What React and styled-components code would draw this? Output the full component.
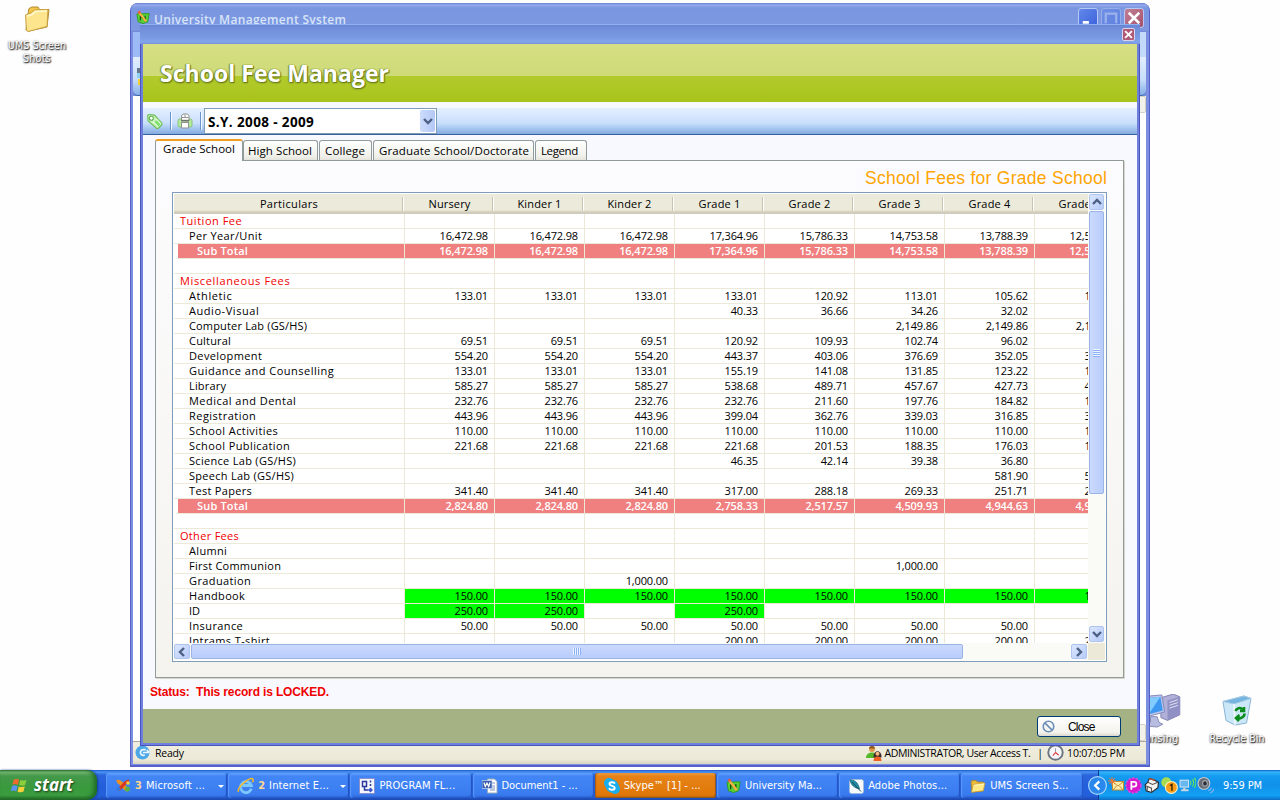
import React, { useLayoutEffect, useRef } from 'react';
import styled, { createGlobalStyle, css } from 'styled-components';

const UI = `"Open Sans", "Noto Sans", sans-serif`;
const TAHOMA = `"DejaVu Sans Condensed", "DejaVu Sans", "Noto Sans", sans-serif`;
const SANS = `"Liberation Sans", sans-serif`;

const Global = createGlobalStyle`
  * { box-sizing: border-box; }
  body { margin: 0; overflow: hidden; background: #fefefe; }
`;

/* Tracks a label out (or in) so that it fills a given advance width. */
const Label = styled.span`
  display: inline-block;
  white-space: pre;
`;
function Fit({ w, children }) {
  const ref = useRef(null);
  useLayoutEffect(() => {
    const el = ref.current;
    el.style.letterSpacing = '0px';
    const natural = el.getBoundingClientRect().width;
    el.style.letterSpacing = `${(w - natural) / (el.textContent.length - 0.5)}px`;
  }, [w, children]);
  return <Label ref={ref}>{children}</Label>;
}

const Desktop = styled.main`
  position: relative;
  width: 1280px;
  height: 800px;
  overflow: hidden;
  background: #fefefe;
  color: #000;
  font: 11px ${UI};
`;

const Shortcut = styled.div`
  position: absolute;
  left: ${(p) => p.$x}px;
  top: ${(p) => p.$y}px;
  width: 80px;
  display: flex;
  flex-direction: column;
  align-items: center;
  gap: ${(p) => p.$gap ?? 4}px;
  color: #fff;
  font: 10.5px/13px ${TAHOMA};
  text-align: center;
  text-shadow: 1px 1px 1px #333, 0 1px 2px #555, 0 0 2px #888;
`;

/* ---------- outer window ---------- */
const OuterWindow = styled.section`
  position: absolute;
  left: 130px;
  top: 3px;
  width: 1020px;
  height: 764px;
  display: flex;
  flex-direction: column;
  border: solid #5560c8;
  border-width: 0 1px 2px;
  border-radius: 8px 8px 0 0;
  overflow: hidden;
  background: #7b8ee0;
`;
const OuterTitle = styled.header`
  height: 29px;
  flex: none;
  display: flex;
  align-items: flex-start;
  padding: 7px 5px 0 5px;
  background: linear-gradient(#6880d0 0, #93abea 2px, #7b96e0 5px, #7b98e1 20px, #8098e0 27px, #6f88d8);
  color: #d8e4f8;
  font: 600 12px/20px ${UI};
`;
const OuterName = styled.div`
  flex: 1;
  padding-left: 4px;
`;
const Caption = styled.span`
  width: 20px;
  height: 20px;
  margin: -2px 0 0 3px;
  display: flex;
  align-items: center;
  justify-content: center;
  border: 1px solid #b8c8f4;
  border-radius: 3px;
  opacity: ${(p) => (p.$dim ? 0.45 : 1)};
  background: ${(p) => (p.$red ? 'linear-gradient(135deg,#c08098,#a8506a)' : 'linear-gradient(135deg,#6288ea,#3c62dc)')};
`;
const OuterMenu = styled.div`
  height: 25px;
  flex: none;
  margin: 0 3px 0 2px;
  background: linear-gradient(90deg, #9cbaf6, #c4dafa);
`;
const OuterTools = styled.div`
  height: 39px;
  flex: none;
  margin: 0 3px 0 2px;
  padding: 11px 0 0 4px;
  border-bottom: 1px solid #3866a8;
  border-radius: 0 0 5px 5px;
  background: linear-gradient(#e2eefe, #c6dcfa 60%, #86aee6);
`;
const OuterClient = styled.div`
  flex: 1;
  margin: 0 3px 0 2px;
  display: flex;
  flex-direction: column;
  align-items: flex-end;
  justify-content: space-between;
  background: #fff;
`;
const DisabledArrow = styled.div`
  width: 17px;
  height: 17px;
  border: 1px solid #d4d2c4;
  border-radius: 2px;
  background: #f2f1ea;
`;
const OuterStatus = styled.footer`
  height: 23px;
  flex: none;
  margin: 0 3px 1px 2px;
  padding: 0 21px 1px 2px;
  display: flex;
  align-items: center;
  border-top: 1px solid #aca899;
  background: linear-gradient(#f0eee0, #ece9d8 80%, #d8d4c0);
  font: 10.5px/16px ${UI};
`;
const StatusText = styled.span`
  margin-left: ${(p) => p.$ml ?? 5}px;
`;
const Spacer = styled.div`
  flex: 1;
`;

/* ---------- inner window ---------- */
const InnerWindow = styled.section`
  position: absolute;
  left: 140px;
  top: 24px;
  width: 1000px;
  height: 722px;
  display: flex;
  flex-direction: column;
  border: solid #4a55bb;
  border-width: 0 1px 1px;
  background: #6f80dc;
  padding: 0 2px 2px;
`;
const InnerTitle = styled.header`
  height: 20px;
  flex: none;
  margin: 0 -3px;
  padding: 0 5px 0 0;
  display: flex;
  align-items: center;
  justify-content: flex-end;
  border-top: 1px solid #8fb0f0;
  background: linear-gradient(#6a84d4, #7391dc 5px, #7899e2 12px, #82a5ea 17px, #7890dc);
`;
const MiniClose = styled.span`
  width: 13px;
  height: 13px;
  display: flex;
  align-items: center;
  justify-content: center;
  border: 1px solid #d8d4ec;
  border-radius: 2px;
  background: #b05a78;
`;
const Banner = styled.div`
  height: 58px;
  flex: none;
  padding: 13px 17px;
  background: linear-gradient(#d6df84, #cedb78 32px, #b2cb2c 32px, #a9c31c);
  color: #fff;
  font: bold 23px/32px ${UI};
  text-shadow: 0 0 1px #6a7c18, 1px 1px 1px #6a7c18, -1px 0 1px #8a9c30, 0 1px 2px #7b8c20;
`;
const Client = styled.div`
  flex: 1;
  display: flex;
  flex-direction: column;
  padding-top: 6px;
  background: #f8f9fe;
`;
const ToolBar = styled.div`
  height: 27px;
  flex: none;
  display: flex;
  align-items: center;
  padding-left: 3px;
  border-bottom: 1px solid #36609c;
  background: linear-gradient(#e4effe, #cadffc 15px, #a8c8f2 20px, #82abdf);
`;
const Divider = styled.i`
  width: 2px;
  height: 18px;
  margin: 0 ${(p) => p.$r}px 0 ${(p) => p.$l}px;
  background: #6a94cc;
  border-right: 1px solid #f4f8ff;
`;
const Select = styled.div`
  width: 233px;
  height: 26px;
  display: flex;
  align-items: center;
  border: 1px solid #7f9db9;
  background: #fff;
  padding: 0 1px 0 3px;
  font: bold 13.5px/24px ${UI};
`;
const SelectText = styled.div`
  padding-top: 2px;
`;
const SelectButton = styled.span`
  width: 15px;
  height: 22px;
  margin-left: auto;
  display: flex;
  align-items: center;
  justify-content: center;
  border-radius: 2px;
  background: linear-gradient(90deg, #cddcfc, #b4c8f6);
`;
const Tabs = styled.nav`
  height: 22px;
  flex: none;
  display: flex;
  align-items: flex-end;
  margin: 4px 0 0 12px;
  font: 11.5px/17px ${UI};
  z-index: 1;
`;
const Tab = styled.div`
  width: ${(p) => p.$w}px;
  height: 20px;
  margin: 0 1px 1px 0;
  display: flex;
  padding-left: ${(p) => p.$pl}px;
  align-items: center;
  border: 1px solid #919b9c;
  border-radius: 3px 3px 0 0;
  border-bottom: none;
  background: linear-gradient(#fff, #f0f0ea 80%, #e4e4dc);
  ${(p) =>
    p.$active &&
    css`
      height: 22px;
      margin: 0;
      padding-bottom: 5px;
      background: #fcfcfe;
      border-top: 2px solid #f0a020;
    `}
`;
const Panel = styled.section`
  width: 969px;
  height: 518px;
  flex: none;
  margin: -1px 0 0 12px;
  padding: 7px 16px 0;
  display: flex;
  flex-direction: column;
  border: 1px solid #919b9c;
  box-shadow: 1px 1px 0 #d8d6c8;
  background: linear-gradient(#fcfcfe, #f4f3ee);
`;
const PanelTitle = styled.h1`
  height: 20px;
  margin: 0 0 4px auto;
  width: 250px;
  padding-left: 8px;
  background: #fafaff;
  color: #ffa500;
  font: normal 17.5px/21px ${SANS};
`;

/* ---------- fee grid ---------- */
const GridFrame = styled.div`
  width: 935px;
  height: 470px;
  padding: 1px;
  border: 1px solid #7f9db9;
  background: #fff;
  display: grid;
  grid-template: 449px 17px / 914px 17px;
`;
const GridView = styled.div`
  overflow: hidden;
`;
const Row = styled.div`
  width: 951px;
  height: ${(p) => (p.$head ? 20 : 15)}px;
  display: grid;
  grid-template-columns: 231px repeat(8, 90px);
`;
const HeadCell = styled.div`
  display: flex;
  justify-content: center;
  padding-right: 1px;
  line-height: 19px;
  font-size: 11px;
  background: linear-gradient(90deg, #fff, #fff) calc(100% - 1px) 3px / 1px 14px no-repeat,
    linear-gradient(90deg, #c7c5b2, #c7c5b2) calc(100% - 2px) 3px / 1px 14px no-repeat,
    linear-gradient(#ebeadb 16px, #dedbc8 17px, #cbc7b8 19px, #d6d2c2);
`;
const fills = { pink: '#f08080', green: '#00ff00' };
const Cell = styled.div`
  border: solid #ece9d8;
  border-width: 0 1px 1px 0;
  padding-right: 6px;
  text-align: right;
  line-height: 13px;
  letter-spacing: -0.14px;
  overflow: hidden;
  white-space: nowrap;
  background: ${(p) => fills[p.$fill] || '#fff'};
  color: ${(p) => (p.$fill === 'pink' ? '#fff' : '#000')};
  font-weight: ${(p) => (p.$fill === 'pink' ? 600 : 400)};
`;
const kinds = { group: 6, item: 15, total: 19 };
const NameCell = styled(Cell)`
  text-align: left;
  padding: 0 0 0 ${(p) => kinds[p.$kind] || 0}px;
  color: ${(p) => (p.$kind === 'group' ? '#f00000' : p.$kind === 'total' ? '#fff' : '#000')};
  ${(p) =>
    p.$kind === 'total' &&
    css`
      border-left: 4px solid #fff;
    `}
`;

const VBar = styled.div`
  display: flex;
  flex-direction: column;
  align-items: center;
  padding-bottom: 1px;
  background: #fafaf6;
`;
const HBar = styled.div`
  display: flex;
  align-items: center;
  padding-right: 1px;
  background: #fafaf6;
`;
const Corner = styled.div`
  background: #ece9d8;
`;
const ScrollButton = styled.span`
  width: ${(p) => (p.$v ? 15 : 16)}px;
  height: ${(p) => (p.$v ? 16 : 15)}px;
  flex: none;
  display: flex;
  align-items: center;
  justify-content: center;
  border: 1px solid #b0c4f0;
  border-radius: 2px;
  background: linear-gradient(135deg, #dbe6fe, #b6cbf9);
`;
const Thumb = styled.div`
  display: flex;
  align-items: center;
  justify-content: center;
  border-radius: 2px;
  border: 1px solid #9ab4e8;
  ${(p) =>
    p.$vertical
      ? css`
          width: 15px;
          height: 283px;
          margin-top: 1px;
          background: linear-gradient(90deg, #cad9fd, #b9cdfb);
          & > i {
            width: 7px;
            height: 8px;
            background: repeating-linear-gradient(#eef4fe 0 1px, #8cb0f8 1px 2px);
          }
        `
      : css`
          width: 772px;
          height: 15px;
          margin-left: 1px;
          background: linear-gradient(#cad9fd, #b9cdfb);
          & > i {
            width: 8px;
            height: 7px;
            background: repeating-linear-gradient(90deg, #eef4fe 0 1px, #8cb0f8 1px 2px);
          }
        `}
`;

const Lock = styled.div`
  flex: 1;
  padding: 6px 0 0 7px;
  color: #f00000;
  font: bold 12px/16px ${SANS};
`;
const FooterBar = styled.footer`
  height: 34px;
  flex: none;
  display: flex;
  justify-content: flex-end;
  padding: 7px 16px 0 0;
  background: #a5b284;
`;
const CloseButton = styled.button`
  width: 84px;
  height: 21px;
  display: flex;
  align-items: center;
  gap: 13px;
  padding: 0 4px;
  border: 1px solid #003c74;
  border-radius: 3px;
  background: linear-gradient(#fff, #f4f3ee 80%, #dcd8cc);
  color: #000;
  font: 12px/18px ${SANS};
`;

/* ---------- taskbar ---------- */
const TaskBar = styled.nav`
  position: absolute;
  left: 0;
  top: 770px;
  width: 1280px;
  height: 30px;
  display: flex;
  background: linear-gradient(#1c55c8 0, #4a94f4 2px, #2c66dc 5px, #245edb 50%, #2460dc 85%, #1c48b0);
`;
const Start = styled.div`
  width: 97px;
  display: flex;
  align-items: center;
  padding: 0 0 0 10px;
  gap: 5px;
  border-radius: 0 10px 10px 0;
  background: linear-gradient(#2e7230 0, #74b874 2px, #44984a 6px, #399a3c 60%, #3c9c40 85%, #24682a);
  box-shadow: inset -3px -1px 4px #1e6a24, 1px 0 2px #143c98;
  color: #fff;
  font: italic bold 17px/26px ${UI};
  text-shadow: 1px 1px 2px #173c17;
`;
const Tasks = styled.div`
  flex: 1;
  display: flex;
  gap: 1px;
  padding: 3px 0 0 9px;
`;
const Task = styled.div`
  width: 121.2px;
  height: 25px;
  flex: none;
  display: flex;
  align-items: center;
  padding-left: 9px;
  gap: 4px;
  border-radius: 3px;
  color: #fff;
  font: 11px/20px ${TAHOMA};
  background: ${(p) =>
    p.$hot
      ? 'linear-gradient(#f0a040 0, #e68218 3px, #e07808 85%, #c86808)'
      : 'linear-gradient(#6aa4fa 0, #4286f6 3px, #3a7cf0 85%, #2f68da)'};
  box-shadow: inset 1px 0 1px ${(p) => (p.$hot ? '#a85808' : '#5c98f8')}, inset -1px -1px 1px ${(p) => (p.$hot ? '#8a5820' : '#2452c0')};
`;
const Count = styled.b`
  color: #ffd890;
  font-weight: 600;
`;
const DropArrow = styled.i`
  margin: 2px 3px 0 auto;
  border: 3px solid transparent;
  border-top-color: #fff;
  border-bottom: 0;
`;
const Tray = styled.div`
  width: 182px;
  display: flex;
  align-items: center;
  background: linear-gradient(#0c60c8 0, #36b4fa 2px, #149cf0 6px, #1090ea 50%, #12a0f4 85%, #0c6cc4);
  box-shadow: inset 1px 0 0 #0c3c90;
  color: #fff;
  font: 11px/20px ${TAHOMA};
`;
const TrayIcons = styled.div`
  display: flex;
  align-items: center;
  margin: 0 9px 0 -10px;
  gap: 1px;
`;
const TrayClock = styled.div`
  padding-top: 2px;
`;

/* ---------- icons ---------- */
const Svg = ({ s = 16, h, v = 16, children, ...rest }) => (
  <svg width={s} height={h ?? s} viewBox={`0 0 ${v} ${v}`} fill="none" {...rest}>
    {children}
  </svg>
);
const Folder = ({ s }) => (
  <Svg s={s}>
    <path d="M1 4.200 1.800 2.500 6 2.300 7.300 4h6l.4 1.500-.6 7.500L2 14.200Z" fill="#e9b93c" stroke="#a8801c" strokeWidth=".7" />
    <path d="M1.500 14.300 3.300 6.600 15 5 13.300 12.800Z" fill="#ffe987" stroke="#c89a2c" strokeWidth=".7" />
    <path d="M3.800 7.300 14 5.900" stroke="#fffbd0" strokeWidth=".8" />
  </Svg>
);
const DeskFolder = () => (
  <Svg s={28} h={28} v={28}>
    <path d="M5 8.500 6 3.500 9 2h6l1.500 2.500L26 4.500 24 22 6 26 3 25Z" fill="#f3c64a" stroke="#b08a30" />
    <path d="M3.500 25.500 2.500 10 8 8l3.500-3L25 4.500 24 21.500 5 26.500Z" fill="#fce58c" stroke="#c9a040" />
    <path d="M4 11 9 9.500 12.500 6.500 24 6" stroke="#fffad4" strokeWidth="1.500" />
  </Svg>
);
const UmsIcon = ({ s = 14 }) => (
  <Svg s={s}>
    <path d="M1 4.500 15 4 13.500 13.500 8 15.500 2.500 13.500Z" fill="#5cd038" stroke="#2c9c1c" />
    <path d="M5 12V7l5.500 5V6.500" stroke="#0e4a10" strokeWidth="1.300" />
    <path d="M3.500 3 11.500 13" stroke="#f8b040" strokeWidth="2.600" />
    <path d="m2.800 1.500 1.800 2.200" stroke="#f05838" strokeWidth="3" />
  </Svg>
);
const X = ({ s = 12, w = 2.2 }) => (
  <Svg s={s}>
    <path d="m2 2 12 12M14 2 2 14" stroke="#fff" strokeWidth={w * 1.3} />
  </Svg>
);
const Chevron = ({ r = 0 }) => (
  <Svg s={12} v={12}>
    <path d="m2 4 4 4 4-4" stroke="#4d6185" strokeWidth="2.400" transform={`rotate(${r} 6 6)`} />
  </Svg>
);
const Tag = () => (
  <Svg s={17}>
    <path d="M1.500 2.500 2.500 1.500 8 2 15 9.500v1.500L11.500 14.500H10L2 7.500Z" fill="#c8f2b8" stroke="#6cbc58" />
    <path d="m8.500 8 3-2.300 3 4-3.500 4-3.500-3.500Z" fill="#7ce06c" />
    <circle cx="5" cy="5" r="1.900" fill="#fff" stroke="#5cac4c" />
    <path d="m6.500 8 5 5M9.500 5.500l4.500 4.700" stroke="#eefce6" />
  </Svg>
);
const Printer = () => (
  <Svg s={16}>
    <path d="M1 7.500 2 6h12l1 1.500v5L14 14H2l-1-1.500Z" fill="#b4ec9c" stroke="#8cc07c" />
    <path d="M4.500 8V3L6 1h4.500L12 3v5Z" fill="#fff" stroke="#909490" />
    <path d="M4.500 4.500h7M8 1.500v3" stroke="#909490" />
    <rect x="4.500" y="9.500" width="7" height="5.500" fill="#fff" stroke="#909490" />
    <path d="M4 7.500h8" stroke="#70746c" strokeWidth="1.400" />
  </Svg>
);
const Ban = () => (
  <Svg s={13}>
    <circle cx="8" cy="8" r="6.500" stroke="#6b8fb8" strokeWidth="2" />
    <path d="m3.500 3.500 9 9" stroke="#6b8fb8" strokeWidth="2" />
  </Svg>
);
const Refresh = () => (
  <Svg s={15}>
    <circle cx="8" cy="8" r="7.500" fill="#4ea8e8" />
    <path d="M11.500 5H8.500A3 3 0 1 0 10.500 10.500M8.500 8H15M12.500 5.500 15.500 8" stroke="#e8f6ff" strokeWidth="1.800" />
  </Svg>
);
const Users = () => (
  <Svg s={16}>
    <circle cx="6" cy="4" r="3" fill="#e09848" />
    <path d="M3 3.500C3 0 9 0 9 3.500Z" fill="#8c5420" />
    <path d="M0 13c0-4 3-5.500 6-5.500s5 2 5 5.500Z" fill="#58b82c" />
    <path d="M7.500 12.500c-.5-8.500 8.500-8.500 8 0Z" fill="#3a2a2a" />
    <circle cx="11.500" cy="8.800" r="2" fill="#f4b880" />
    <path d="M7.500 16c0-3 1.500-4.500 4-4.500s4 1.500 4 4.500Z" fill="#f06020" />
  </Svg>
);
const Clock = () => (
  <Svg s={17}>
    <circle cx="8" cy="8" r="6.800" fill="#f4f6fa" stroke="#6c7480" strokeWidth="1.800" />
    <path d="M8 4V8" stroke="#99a" />
    <path d="m8 8-2.500 3M8 8l3 2.500" stroke="#e03030" />
  </Svg>
);
const WinFlag = () => (
  <Svg s={19} v={18}>
    <path d="M3.500 3.500Q6 2 8.600 3.400L7.500 8.300Q4.800 7 2.300 8.300Z" fill="#f06a2c" />
    <path d="M9.700 3.700Q12.500 5 15.600 3.500L14.400 8.500Q11.500 9.800 8.600 8.600Z" fill="#8cce3c" />
    <path d="M2 9.500Q4.500 8.200 7.200 9.500L6 14.500Q3.500 13.200.8 14.500Z" fill="#5a94f4" />
    <path d="M8.300 9.900Q11.200 11 14 9.800L12.800 14.800Q10 16 7.200 14.900Z" fill="#fcd038" />
  </Svg>
);
const Office = () => (
  <Svg>
    <path d="M2 4c4-2 5 5 11 8" stroke="#f09020" strokeWidth="4" />
    <path d="M14 3c-4 0-6 6-11 9" stroke="#d83820" strokeWidth="3.200" />
    <circle cx="12.500" cy="11" r="2.500" fill="#58b048" />
    <circle cx="3.500" cy="11" r="2" fill="#3478e0" />
    <circle cx="13" cy="5" r="1.800" fill="#f8d040" />
  </Svg>
);
const Ie = () => (
  <Svg s={17}>
    <path d="M13.500 11A5.200 5.200 0 1 1 13.500 8H5" stroke="#7cc8fc" strokeWidth="2.600" />
    <path d="M1.500 14C-.5 11 9 1.500 14.500 1.500 16 2 15 4 14.500 5" stroke="#f4b828" strokeWidth="1.400" />
  </Svg>
);
const Program = () => (
  <Svg>
    <rect x=".5" y=".5" width="15" height="15" fill="#f4f6ff" stroke="#8890cc" />
    <path d="M3.500 3.500h4v5h-4zM5.500 9v3h4M11.500 2.500v2M11.500 6v2" stroke="#28389c" strokeWidth="1.500" />
    <path d="m11.500 9.500 2.500 2.500-2.500 2.500L9 12Z" fill="#3858c8" />
  </Svg>
);
const Word = () => (
  <Svg>
    <path d="M5.500 1h7l2.500 2.500V15h-9.500Z" fill="#fff" stroke="#9ab" />
    <path d="M8 8h5M8 10h5M8 12h5M10 5h3" stroke="#7890c0" />
    <rect x="0" y="2.500" width="10" height="8" fill="#3a5fae" stroke="#c8d8f4" strokeWidth=".7" />
    <path d="m2 4.500 1.300 4L5 5l1.700 3.500L8 4.500" stroke="#fff" strokeWidth="1.200" />
  </Svg>
);
const Skype = () => (
  <Svg>
    <circle cx="5" cy="5" r="5" fill="#18aef0" />
    <circle cx="11" cy="11" r="5" fill="#18aef0" />
    <circle cx="8" cy="8" r="6.500" fill="#18aef0" />
    <path d="M11 5.500C9.500 3.500 5.300 4 5.500 6.200 5.700 8.500 10.500 7.300 10.700 9.800 10.800 12.300 6.300 12.500 5 10.300" stroke="#fff" strokeWidth="1.900" />
  </Svg>
);
const Photoshop = () => (
  <Svg>
    <rect x="1.500" y="1.500" width="14" height="14" rx="2" fill="#f6fafc" stroke="#a8bccc" strokeWidth=".6" />
    <path d="M2 2c4-.5 8 2 9.500 9-5-1-8.500-4-9.500-9Z" fill="#1e8fa8" stroke="#125468" strokeWidth=".7" />
    <path d="m4 4 9 9.500" stroke="#18485c" />
  </Svg>
);
const Recycle = () => (
  <Svg s={30} h={32} v={30}>
    <path d="M1 6.500 22 1 29 3.500 24.500 28 13 30 4 25.500Z" fill="#cce8f8" stroke="#8ab4d4" />
    <path d="M1 6.500 12 9 29 3.500 22 1Z" fill="#74b4e0" stroke="#a8cce4" />
    <path d="m12 9 1 21" stroke="#f0faff" strokeWidth="1.500" />
    <path d="M13.500 16c1-3 5-4 7-1.500M22 12v4h-4M22.500 18.500c0 4-4.500 5.500-7.500 4.500M17 26l-3-3 3.500-3" stroke="#0c8c1c" strokeWidth="2.600" />
  </Svg>
);
const Computer = () => (
  <Svg s={48} h={34} v={36}>
    <path d="M20 4 33 0l7 3v19l-13 6-7-3Z" fill="#b0b0d8" stroke="#8080b0" />
    <path d="m27 7 13-4v19l-13 6Z" fill="#9090c4" />
    <path d="m29 9 9-3M29 12l9-3M29 15l9-3" stroke="#e4e4f8" />
    <path d="M-2 3 21 1l3 18-22 6Z" fill="#c0c4e8" stroke="#8088b8" />
    <path d="M0 5 19.500 3 22 17.500 3 22.500Z" fill="#3c98f0" />
    <path d="M0 5 19.500 3 8 20 3 22Z" fill="#82ccff" />
    <path d="M9 24h7l2 6 4 2-6 3-9-1-3-3 5-1Z" fill="#b8bce0" stroke="#8488b4" />
  </Svg>
);
const TrayArrow = () => (
  <Svg s={19}>
    <circle cx="8" cy="8" r="7.500" fill="#2a88ec" stroke="#a8d8ff" />
    <path d="M9.500 4.500 6 8l3.500 3.500" stroke="#fff" strokeWidth="1.900" />
  </Svg>
);
const Mail = () => (
  <Svg s={16}>
    <rect x="4.500" y="4.500" width="11" height="8.500" fill="#fcecb0" stroke="#c09030" />
    <path d="m5 5 5 4 5-4M5 13l3.500-4M15 13l-3.500-4" stroke="#c09030" />
    <path d="M4 0v8M0 4h8M1.200 1.200l5.600 5.600M6.800 1.200 1.200 6.800" stroke="#f87830" />
  </Svg>
);
const PBadge = () => (
  <Svg s={17}>
    <circle cx="8" cy="8" r="7" fill="#d818cc" stroke="#e048dc" strokeDasharray="2 1.500" strokeWidth="1.500" />
    <path d="M6 12V4.500h2.500a2.200 2.200 0 0 1 0 4.500H6" stroke="#fff" strokeWidth="1.700" />
  </Svg>
);
const Device = () => (
  <Svg s={17}>
    <path d="M2 7.500 4.500 5 6 1.500 11 3l3.500 2-.5 5-6 4.500-5-1.500Z" fill="#f6f4f0" stroke="#222" />
    <path d="m4.500 5 4.500 2 5-2M2 8l6 2.500v4M4 9v4" stroke="#555" />
    <path d="m6 1.500 5 1.500" stroke="#b05030" strokeWidth="1.500" />
  </Svg>
);
const Alert = () => (
  <Svg s={17}>
    <circle cx="5" cy="5" r="4.800" fill="#a8dc50" />
    <circle cx="9.800" cy="9.800" r="5.600" fill="#f89c18" stroke="#fff4c0" />
    <path d="m8.300 8 2-1v6" stroke="#302000" strokeWidth="1.300" />
  </Svg>
);
const Net = () => (
  <Svg s={17}>
    <rect x="1" y="3" width="8" height="6.500" fill="#68b8f0" stroke="#d0e4f4" />
    <path d="M2 12.500h7M5 10v3" stroke="#c8d4e0" strokeWidth="2" />
    <path d="M10.500 3.500q1.500 2 0 4M12.500 2q2.500 3.500 0 7M14.500.8q3 4.700 0 9.400" stroke="#68e858" />
  </Svg>
);
const Speaker = () => (
  <Svg s={17}>
    <ellipse cx="6.500" cy="6" rx="5.500" ry="5.500" fill="#686c74" stroke="#c8ccd4" />
    <ellipse cx="7.500" cy="6" rx="2.200" ry="2.600" fill="#282c34" stroke="#a8acb4" />
    <path d="M10.500 13q2.500-.5 3-3M12.500 15q3-1.500 3.500-4" stroke="#88b8f0" />
  </Svg>
);

/* ---------- data ---------- */
const heads = [
  ['Particulars', 58],
  ['Nursery', 42],
  ['Kinder 1', 44],
  ['Kinder 2', 44],
  ['Grade 1', 42],
  ['Grade 2', 42],
  ['Grade 3', 42],
  ['Grade 4', 42],
  ['Grade 5', 42],
];
const rows = [
  ['group', 'Tuition Fee', 62],
  ['item', 'Per Year/Unit', 73, '16,472.98 16,472.98 16,472.98 17,364.96 15,786.33 14,753.58 13,788.39 12,531.27'],
  ['total', 'Sub Total', 51, '16,472.98 16,472.98 16,472.98 17,364.96 15,786.33 14,753.58 13,788.39 12,531.27'],
  ['blank', ''],
  ['group', 'Miscellaneous Fees', 110],
  ['item', 'Athletic', 43, '133.01 133.01 133.01 133.01 120.92 113.01 105.62 105.62'],
  ['item', 'Audio-Visual', 70, '- - - 40.33 36.66 34.26 32.02 -'],
  ['item', 'Computer Lab (GS/HS)', 118, '- - - - - 2,149.86 2,149.86 2,149.86'],
  ['item', 'Cultural', 42, '69.51 69.51 69.51 120.92 109.93 102.74 96.02 -'],
  ['item', 'Development', 73, '554.20 554.20 554.20 443.37 403.06 376.69 352.05 352.05'],
  ['item', 'Guidance and Counselling', 145, '133.01 133.01 133.01 155.19 141.08 131.85 123.22 123.22'],
  ['item', 'Library', 37, '585.27 585.27 585.27 538.68 489.71 457.67 427.73 427.73'],
  ['item', 'Medical and Dental', 107, '232.76 232.76 232.76 232.76 211.60 197.76 184.82 184.82'],
  ['item', 'Registration', 67, '443.96 443.96 443.96 399.04 362.76 339.03 316.85 316.85'],
  ['item', 'School Activities', 89, '110.00 110.00 110.00 110.00 110.00 110.00 110.00 110.00'],
  ['item', 'School Publication', 101, '221.68 221.68 221.68 221.68 201.53 188.35 176.03 176.03'],
  ['item', 'Science Lab (GS/HS)', 107, '- - - 46.35 42.14 39.38 36.80 -'],
  ['item', 'Speech Lab (GS/HS)', 105, '- - - - - - 581.90 581.90'],
  ['item', 'Test Papers', 63, '341.40 341.40 341.40 317.00 288.18 269.33 251.71 251.71'],
  ['total', 'Sub Total', 51, '2,824.80 2,824.80 2,824.80 2,758.33 2,517.57 4,509.93 4,944.63 4,944.63'],
  ['blank', ''],
  ['group', 'Other Fees', 59],
  ['item', 'Alumni', 38],
  ['item', 'First Communion', 92, '- - - - - 1,000.00 - -'],
  ['item', 'Graduation', 62, '- - 1,000.00 - - - - -'],
  ['item', 'Handbook', 56, '150.00 150.00 150.00 150.00 150.00 150.00 150.00 150.00', 'green'],
  ['item', 'ID', 11, '250.00 250.00 - 250.00 - - - -', 'green'],
  ['item', 'Insurance', 54, '50.00 50.00 50.00 50.00 50.00 50.00 50.00 -'],
  ['item', 'Intrams T-shirt', 81, '- - - 200.00 200.00 200.00 200.00 200.00'],
];
/* label, label width, tab width, left padding */
const tabs = [
  ['Grade School', 72, 88, 7, true],
  ['High School', 64, 75, 4],
  ['College', 40, 53, 5],
  ['Graduate School/Doctorate', 150, 161, 5],
  ['Legend', 37, 52, 5],
];
const tasks = [
  [<Office />, 'Microsoft ...', 59, '3'],
  [<Ie />, 'Internet E...', 60, '2'],
  [<Program />, 'PROGRAM FL...', 76],
  [<Word />, 'Document1 - ...', 76],
  [<Skype />, 'Skype™ [1] - ...', 77, null, true],
  [<UmsIcon s={15} />, 'University Ma...', 77],
  [<Photoshop />, 'Adobe Photos...', 79],
  [<Folder />, 'UMS Screen S...', 78],
];

function FeeRow({ row: [kind, name, w, text, mark] }) {
  const values = text ? text.split(' ') : Array(8).fill('-');
  return (
    <Row>
      <NameCell $kind={kind} $fill={kind === 'total' ? 'pink' : null}>
        {name && <Fit w={w}>{name}</Fit>}
      </NameCell>
      {values.map((v, i) => (
        <Cell key={i} $fill={kind === 'total' ? 'pink' : v !== '-' ? mark : null}>
          {v === '-' ? '' : v}
        </Cell>
      ))}
    </Row>
  );
}

function FeeGrid() {
  return (
    <GridFrame>
      <GridView>
        <Row $head>
          {heads.map(([name, w]) => (
            <HeadCell key={name}>
              <Fit w={w}>{name}</Fit>
            </HeadCell>
          ))}
        </Row>
        {rows.map((row, i) => (
          <FeeRow key={i} row={row} />
        ))}
      </GridView>
      <VBar>
        <ScrollButton $v><Chevron r={180} /></ScrollButton>
        <Thumb $vertical><i /></Thumb>
        <Spacer />
        <ScrollButton $v><Chevron /></ScrollButton>
      </VBar>
      <HBar>
        <ScrollButton><Chevron r={90} /></ScrollButton>
        <Thumb><i /></Thumb>
        <Spacer />
        <ScrollButton><Chevron r={-90} /></ScrollButton>
      </HBar>
      <Corner />
    </GridFrame>
  );
}

export default function App() {
  return (
    <Desktop>
      <Global />
      <Shortcut $x={-3} $y={5} $gap={6}>
        <DeskFolder />
        <div><Fit w={58}>UMS Screen</Fit><br /><Fit w={28}>Shots</Fit></div>
      </Shortcut>
      <Shortcut $x={1119} $y={694} $gap={4}>
        <Computer />
        <Fit w={39}>Lansing</Fit>
      </Shortcut>
      <Shortcut $x={1197} $y={694} $gap={6}>
        <Recycle />
        <Fit w={55}>Recycle Bin</Fit>
      </Shortcut>

      <OuterWindow>
        <OuterTitle>
          <UmsIcon />
          <OuterName><Fit w={192}>University Management System</Fit></OuterName>
          <Caption>
            <Svg s={14}><path d="M2 13h7" stroke="#fff" strokeWidth="3" /></Svg>
          </Caption>
          <Caption $dim>
            <Svg s={14}><path d="M2 14V3h12v11" stroke="#c0d0fa" strokeWidth="2.500" /></Svg>
          </Caption>
          <Caption $red><X s={14} /></Caption>
        </OuterTitle>
        <OuterMenu />
        <OuterTools>
          <Svg s={20} v={20}>
            <path d="M0 0h16v5H0z" fill="#68788c" />
            <path d="M0 5h16v5H0z" fill="#8cd0f8" />
            <path d="M1 11h16v6H1z" fill="#f0d030" />
          </Svg>
        </OuterTools>
        <OuterClient>
          <DisabledArrow />
          <DisabledArrow />
        </OuterClient>
        <OuterStatus>
          <Refresh />
          <StatusText><Fit w={29}>Ready</Fit></StatusText>
          <Spacer />
          <Users />
          <StatusText $ml={3}><Fit w={146}>ADMINISTRATOR, User Access T.</Fit></StatusText>
          <StatusText $ml={7}>|</StatusText>
          <StatusText $ml={4} />
          <Clock />
          <StatusText $ml={3}><Fit w={58}>10:07:05 PM</Fit></StatusText>
        </OuterStatus>
      </OuterWindow>

      <InnerWindow>
        <InnerTitle>
          <MiniClose><X s={9} w={2.5} /></MiniClose>
        </InnerTitle>
        <Banner><Fit w={229}>School Fee Manager</Fit></Banner>
        <Client>
          <ToolBar>
            <Tag />
            <Divider $l={7} $r={5} />
            <Printer />
            <Divider $l={7} $r={2} />
            <Select>
              <SelectText><Fit w={106}>S.Y. 2008 - 2009</Fit></SelectText>
              <SelectButton><Chevron /></SelectButton>
            </Select>
          </ToolBar>
          <Tabs>
            {tabs.map(([name, w, width, pl, active]) => (
              <Tab key={name} $w={width} $pl={pl} $active={active}><Fit w={w}>{name}</Fit></Tab>
            ))}
          </Tabs>
          <Panel>
            <PanelTitle><Fit w={242}>School Fees for Grade School</Fit></PanelTitle>
            <FeeGrid />
          </Panel>
          <Lock><Fit w={179}>{'Status:  This record is LOCKED.'}</Fit></Lock>
          <FooterBar>
            <CloseButton><Ban /><Fit w={27}>Close</Fit></CloseButton>
          </FooterBar>
        </Client>
      </InnerWindow>

      <TaskBar>
        <Start><WinFlag /><Fit w={39}>start</Fit></Start>
        <Tasks>
          {tasks.map(([icon, name, w, count, hot]) => (
            <Task key={name} $hot={hot}>
              {icon}
              {count && <Count>{count}</Count>}
              <Fit w={w}>{name}</Fit>
              {count && <DropArrow />}
            </Task>
          ))}
        </Tasks>
        <Tray>
          <TrayIcons>
            <TrayArrow /><Mail /><PBadge /><Device /><Alert /><Net /><Speaker />
          </TrayIcons>
          <TrayClock><Fit w={39}>9:59 PM</Fit></TrayClock>
        </Tray>
      </TaskBar>
    </Desktop>
  );
}
